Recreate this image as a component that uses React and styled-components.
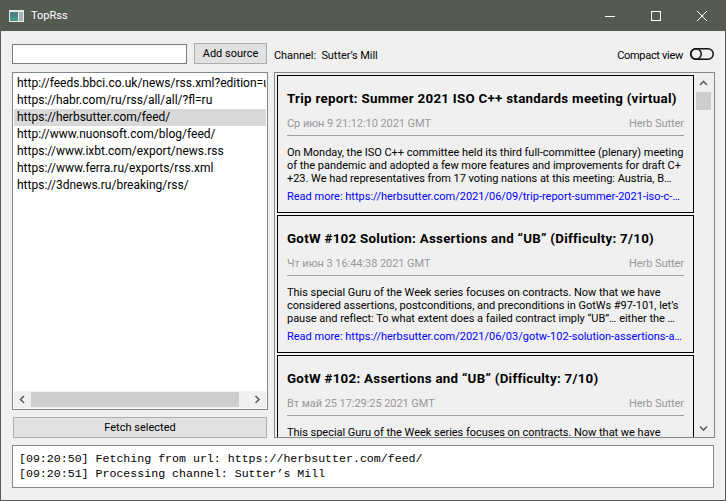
import React from 'react';
import styled, { createGlobalStyle } from 'styled-components';

const GlobalStyle = createGlobalStyle`
  html, body {
    margin: 0;
    padding: 0;
  }

  body {
    font-family: Roboto, "Liberation Sans", sans-serif;
    font-size: 11px;
    color: #000;
  }
`;

const Window = styled.div`
  width: 726px;
  height: 501px;
  box-sizing: border-box;
  border: 1px solid #545c52;
  border-top: none;
  background: #f0f0f0;
  display: flex;
  flex-direction: column;
  overflow: hidden;
`;

const TitleBar = styled.div`
  height: 31px;
  flex: none;
  background: #545c52;
  display: flex;
  align-items: center;
  padding-left: 8px;
  color: #fff;
  font-size: 11px;
`;

const AppIcon = styled.svg`
  width: 15px;
  height: 12px;
  margin-right: 7px;
`;

const TitleText = styled.span`
  flex: 1;
`;

const WindowButton = styled.div`
  width: 46px;
  height: 31px;
  display: flex;
  align-items: center;
  justify-content: center;
`;

const Content = styled.div`
  flex: 1;
  min-height: 0;
  display: flex;
  flex-direction: column;
  padding: 12px 11px 12px 11px;
`;

const TopRow = styled.div`
  height: 21px;
  display: flex;
  align-items: center;
  margin-bottom: 8px;
  flex: none;
`;

const UrlInput = styled.div`
  width: 175px;
  height: 20px;
  box-sizing: border-box;
  background: #fff;
  border: 1px solid #7a7a7a;
  margin-right: 7px;
`;

const Button = styled.div`
  box-sizing: border-box;
  background: #e1e1e1;
  border: 1px solid #adadad;
  display: flex;
  align-items: center;
  justify-content: center;
  height: 21px;
  width: ${p => p.$width};
`;

const ChannelLabel = styled.div`
  margin: 4px 0 0 7px;
  flex: 1;
  white-space: pre;
  letter-spacing: -0.06px;
`;

const CompactLabel = styled.div`
  margin: 4px 7px 0 0;
  letter-spacing: -0.3px;
`;

const Toggle = styled.svg`
  width: 24px;
  height: 12px;
  flex: none;
`;

const Columns = styled.div`
  flex: none;
  height: 366px;
  display: flex;
  gap: 6px;
`;

const LeftColumn = styled.div`
  width: 256px;
  flex: none;
  display: flex;
  flex-direction: column;
`;

const SourceList = styled.div`
  height: 338px;
  box-sizing: border-box;
  flex: none;
  background: #fff;
  border: 1px solid #828790;
  padding: 2px 1px 1px;
  display: flex;
  flex-direction: column;
  overflow: hidden;
`;

const SourceItems = styled.div`
  flex: 1;
  min-height: 0;
  overflow: hidden;
`;

const SourceItem = styled.div`
  height: 17px;
  line-height: 17px;
  font-size: 12px;
  padding-left: 3px;
  white-space: nowrap;
  overflow: hidden;
  background: ${p => (p.$selected ? '#d9d9d9' : 'transparent')};
`;

const HScroll = styled.div`
  height: 17px;
  flex: none;
  background: #f0f0f0;
  display: flex;
  align-items: center;
`;

const ScrollArrow = styled.div`
  width: 17px;
  height: 17px;
  flex: none;
  display: flex;
  align-items: center;
  justify-content: center;
`;

const HTrack = styled.div`
  flex: 1;
  height: 15px;
  display: flex;
`;

const HThumb = styled.div`
  width: 208px;
  height: 15px;
  background: #cdcdcd;
`;

const FetchRow = styled.div`
  margin: 7px 1px 0;
`;

const FeedPanel = styled.div`
  width: 441px;
  flex: none;
  box-sizing: border-box;
  border: 1px solid #828790;
  padding: 2px 1px 0 2px;
  display: flex;
  overflow: hidden;
`;

const CardList = styled.div`
  width: 417px;
  flex: none;
  display: flex;
  flex-direction: column;
  gap: 2px;
  overflow: hidden;
`;

const Card = styled.div`
  height: 138px;
  flex: none;
  box-sizing: border-box;
  border: 1px solid #000;
  padding: 0 9px;
  overflow: hidden;
`;

const CardTitle = styled.div`
  font-size: 13.33px;
  font-weight: 700;
  letter-spacing: 0.28px;
  padding: 13px 0 7px;
  line-height: 20px;
  white-space: nowrap;
`;

const CardMeta = styled.div`
  display: flex;
  justify-content: space-between;
  color: #999;
  height: 16px;
  line-height: 16px;
  padding-bottom: 3px;
  border-bottom: 1px solid #a0a0a0;
  margin-bottom: 10px;
  letter-spacing: -0.06px;
`;

const CardBody = styled.div`
  line-height: 13px;
  height: 39px;
  white-space: nowrap;
  margin-bottom: 4px;
  letter-spacing: -0.03px;
`;

const CardLink = styled.div`
  color: #0000ff;
  line-height: 16px;
  white-space: nowrap;
`;

const VScroll = styled.div`
  width: 17px;
  flex: none;
  margin-left: 1px;
  display: flex;
  flex-direction: column;
`;

const VTrack = styled.div`
  flex: 1;
  padding: 0 1px;
`;

const VThumb = styled.div`
  height: 18px;
  background: #cdcdcd;
`;

const LogPanel = styled.div`
  margin-top: 7px;
  height: 43px;
  flex: none;
  box-sizing: border-box;
  background: #fff;
  border: 1px solid #828790;
  padding: 5px 6px;
  font-family: "Liberation Mono", "DejaVu Sans Mono", monospace;
  font-size: 11.6px;
  line-height: 15px;
  white-space: pre;
`;

const Chevron = ({ direction }) => {
  const points = {
    up: '1,6 4.5,2.5 8,6',
    down: '1,2.5 4.5,6 8,2.5',
    left: '6,1 2.5,4.5 6,8',
    right: '2.5,1 6,4.5 2.5,8',
  }[direction];
  return (
    <svg width="9" height="9" viewBox="0 0 9 9">
      <polyline points={points} fill="none" stroke="#606060" strokeWidth="1.6" />
    </svg>
  );
};

const sources = [
  'http://feeds.bbci.co.uk/news/rss.xml?edition=uk',
  'https://habr.com/ru/rss/all/all/?fl=ru',
  'https://herbsutter.com/feed/',
  'http://www.nuonsoft.com/blog/feed/',
  'https://www.ixbt.com/export/news.rss',
  'https://www.ferra.ru/exports/rss.xml',
  'https://3dnews.ru/breaking/rss/',
];

const posts = [
  {
    title: 'Trip report: Summer 2021 ISO C++ standards meeting (virtual)',
    date: 'Ср июн 9 21:12:10 2021 GMT',
    lines: [
      'On Monday, the ISO C++ committee held its third full-committee (plenary) meeting',
      'of the pandemic and adopted a few more features and improvements for draft C+',
      '+23. We had representatives from 17 voting nations at this meeting: Austria, B…',
    ],
    link: 'Read more: https://herbsutter.com/2021/06/09/trip-report-summer-2021-iso-c-…',
  },
  {
    title: 'GotW #102 Solution: Assertions and “UB” (Difficulty: 7/10)',
    date: 'Чт июн 3 16:44:38 2021 GMT',
    lines: [
      'This special Guru of the Week series focuses on contracts. Now that we have',
      'considered assertions, postconditions, and preconditions in GotWs #97-101, let’s',
      'pause and reflect: To what extent does a failed contract imply “UB”… either the …',
    ],
    link: 'Read more: https://herbsutter.com/2021/06/03/gotw-102-solution-assertions-a…',
  },
  {
    title: 'GotW #102: Assertions and “UB” (Difficulty: 7/10)',
    date: 'Вт май 25 17:29:25 2021 GMT',
    lines: ['This special Guru of the Week series focuses on contracts. Now that we have'],
    link: '',
  },
];

const App = () => (
  <Window>
    <GlobalStyle />
    <TitleBar>
      <AppIcon viewBox="0 0 15 12">
        <rect x="0" y="0" width="15" height="12" fill="#e8e8e8" />
        <rect x="1" y="2" width="8" height="9" fill="#4f7f88" />
        <rect x="1" y="7" width="8" height="4" fill="#3f9a8c" />
        <rect x="10" y="2" width="4" height="9" fill="#a8b4b0" />
      </AppIcon>
      <TitleText>TopRss</TitleText>
      <WindowButton>
        <svg width="10" height="10" viewBox="0 0 10 10">
          <line x1="0" y1="5.5" x2="10" y2="5.5" stroke="#fff" strokeWidth="1" />
        </svg>
      </WindowButton>
      <WindowButton>
        <svg width="10" height="10" viewBox="0 0 10 10">
          <rect x="0.5" y="0.5" width="9" height="9" fill="none" stroke="#fff" strokeWidth="1" />
        </svg>
      </WindowButton>
      <WindowButton>
        <svg width="10" height="10" viewBox="0 0 10 10">
          <path d="M0 0 L10 10 M10 0 L0 10" stroke="#fff" strokeWidth="1" />
        </svg>
      </WindowButton>
    </TitleBar>
    <Content>
      <TopRow>
        <UrlInput />
        <Button $width="73px">Add source</Button>
        <ChannelLabel>Channel:  Sutter’s Mill</ChannelLabel>
        <CompactLabel>Compact view</CompactLabel>
        <Toggle viewBox="0 0 24 12">
          <rect x="0.75" y="0.75" width="22.5" height="10.5" rx="5.25" fill="none" stroke="#111" strokeWidth="1.5" />
          <circle cx="6" cy="6" r="5.25" fill="none" stroke="#111" strokeWidth="1.5" />
        </Toggle>
      </TopRow>
      <Columns>
        <LeftColumn>
          <SourceList>
            <SourceItems>
              {sources.map((url, i) => (
                <SourceItem key={url} $selected={i === 2}>{url}</SourceItem>
              ))}
            </SourceItems>
            <HScroll>
              <ScrollArrow><Chevron direction="left" /></ScrollArrow>
              <HTrack><HThumb /></HTrack>
              <ScrollArrow><Chevron direction="right" /></ScrollArrow>
            </HScroll>
          </SourceList>
          <FetchRow>
            <Button $width="254px">Fetch selected</Button>
          </FetchRow>
        </LeftColumn>
        <FeedPanel>
          <CardList>
            {posts.map(post => (
              <Card key={post.title}>
                <CardTitle>{post.title}</CardTitle>
                <CardMeta>
                  <span>{post.date}</span>
                  <span>Herb Sutter</span>
                </CardMeta>
                <CardBody>
                  {post.lines.map(line => <div key={line}>{line}</div>)}
                </CardBody>
                <CardLink>{post.link}</CardLink>
              </Card>
            ))}
          </CardList>
          <VScroll>
            <ScrollArrow><Chevron direction="up" /></ScrollArrow>
            <VTrack><VThumb /></VTrack>
            <ScrollArrow><Chevron direction="down" /></ScrollArrow>
          </VScroll>
        </FeedPanel>
      </Columns>
      <LogPanel>
        {'[09:20:50] Fetching from url: https://herbsutter.com/feed/\n[09:20:51] Processing channel: Sutter’s Mill'}
      </LogPanel>
    </Content>
  </Window>
);

export default App;
